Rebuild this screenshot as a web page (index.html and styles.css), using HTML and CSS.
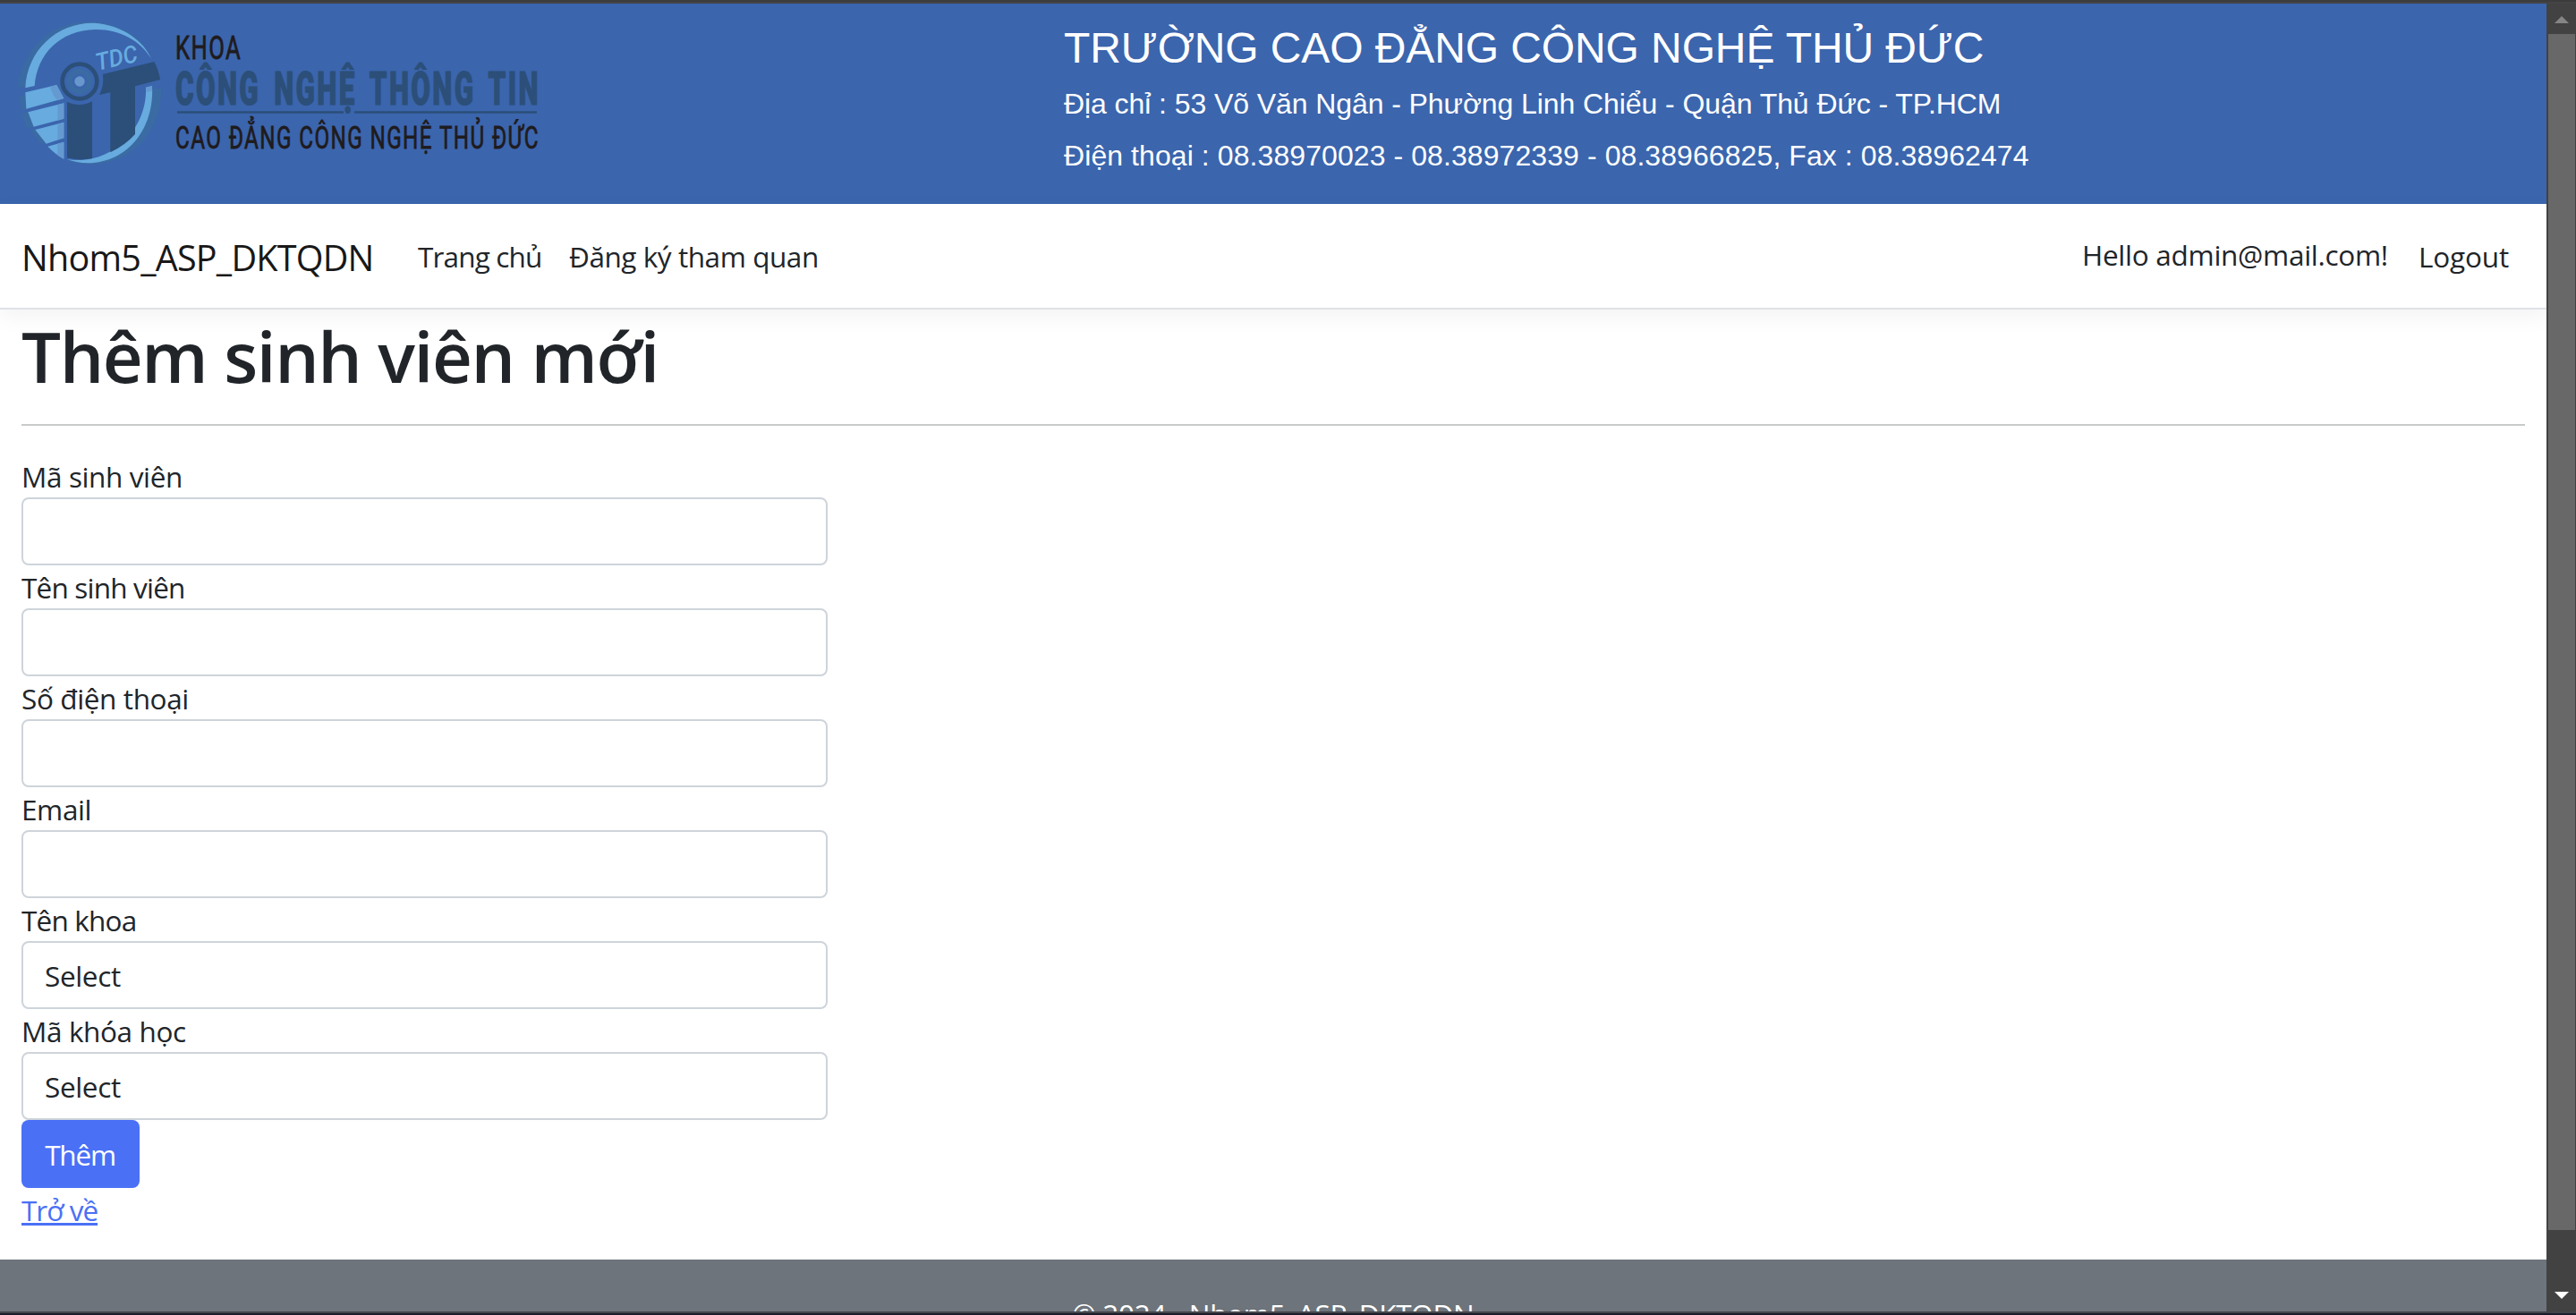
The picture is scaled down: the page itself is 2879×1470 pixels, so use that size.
FILE: index.html
```html
<!DOCTYPE html>
<html lang="vi">
<head>
<meta charset="utf-8">
<title>Thêm sinh viên mới - Nhom5_ASP_DKTQDN</title>
<link rel="stylesheet" href="styles.css">
</head>
<body>
<div class="window-edge"></div>
<div class="viewport">
  <div class="page">
    <div class="banner">
      <svg class="logo" viewBox="0 0 620 200" width="620" height="200">
        <g transform="translate(10 6) scale(.33333)">
          <path fill="#3b6ba3" d="M30 265C45 130 150 30 290 45C400 55 455 110 475 165C430 75 350 50 280 52C160 60 60 150 55 262ZM35 292L58 288L62 335L42 340ZM42 350L64 345L85 395L60 400ZM70 405L88 403L125 450L108 452ZM510 265C515 400 420 525 265 521C235 519 210 514 195 505C330 540 465 440 475 270Z"/>
          <path fill="#67abdf" d="M55 265C60 140 160 45 285 47C380 52 455 110 477 167C440 105 370 68 290 69C170 72 95 150 86 258Z"/>
          <path fill="#67abdf" d="M55 280L160 255L184 300L58 335ZM64 346L184 316V368L83 395ZM88 405L184 380V433L125 452ZM130 461L184 446V503Q155 487 130 461ZM459 263L480 258C488 400 400 515 265 517Q225 516 195 504C345 528 465 400 459 263Z"/>
          <path fill="#659ad0" d="M138 260L160 255L184 300L163 307Q145 290 138 260ZM163 322L184 316V368L163 374ZM163 386L184 380V433L163 439ZM163 452L184 446V503L163 491ZM459 263L480 258V275L461 279Z"/>
          <path fill="#2b4f78" d="M195 312Q235 332 279 310V501Q235 509 195 499ZM315 219L487 177Q502 205 507 237L423 259V420Q390 457 340 481V280L303 288Q320 255 315 219Z"/>
          <circle cx="237" cy="243" r="58" fill="none" stroke="#2b4f78" stroke-width="14"/>
          <circle cx="237" cy="243" r="34" fill="none" stroke="#3b6ba3" stroke-width="17"/>
          <circle cx="237" cy="243" r="17" fill="#6898cb"/>
          <text class="logo-tdc" transform="translate(297 207) rotate(-13)" textLength="142" lengthAdjust="spacingAndGlyphs">TDC</text>
        </g>
        <text class="logo-text" x="196" y="62" font-size="36" textLength="74" lengthAdjust="spacingAndGlyphs">KHOA</text>
        <text class="logo-name" x="196" y="113" font-size="52" textLength="408" lengthAdjust="spacingAndGlyphs">CÔNG NGHỆ THÔNG TIN</text>
        <path stroke="#2b4f78" stroke-width="2.500" d="M198 121.500H384M396 121.500H600"/>
        <text class="logo-text" x="196" y="162" font-size="35" textLength="407" lengthAdjust="spacingAndGlyphs">CAO ĐẲNG CÔNG NGHỆ THỦ ĐỨC</text>
      </svg>
      <div class="school">
        <div class="school-name">TRƯỜNG CAO ĐẲNG CÔNG NGHỆ THỦ ĐỨC</div>
        <div class="school-line address">Địa chỉ : 53 Võ Văn Ngân - Phường Linh Chiểu - Quận Thủ Đức - TP.HCM</div>
        <div class="school-line phone">Điện thoại : 08.38970023 - 08.38972339 - 08.38966825, Fax : 08.38962474</div>
      </div>
    </div>
    <nav class="navbar">
      <a class="brand">Nhom5_ASP_DKTQDN</a>
      <a class="nav-link home">Trang chủ</a>
      <a class="nav-link">Đăng ký tham quan</a>
      <div class="account">
        <span class="hello">Hello admin@mail.com!</span>
        <span class="logout">Logout</span>
      </div>
    </nav>
    <main class="content">
      <h1>Thêm sinh viên mới</h1>
      <hr>
      <form class="form">
        <label class="label">Mã sinh viên</label><div class="control"></div>
        <label class="label tight">Tên sinh viên</label><div class="control"></div>
        <label class="label">Số điện thoại</label><div class="control"></div>
        <label class="label">Email</label><div class="control"></div>
        <label class="label tight">Tên khoa</label><div class="control">Select</div>
        <label class="label">Mã khóa học</label><div class="control">Select</div>
        <button type="button" class="submit">Thêm</button>
      </form>
      <a class="back">Trở về</a>
    </main>
    <footer class="footer">© 2024 - Nhom5_ASP_DKTQDN</footer>
  </div>
  <div class="scrollbar">
    <svg width="16" height="8" viewBox="0 0 16 8"><path fill="#858585" d="M0 8L8 0L16 8Z"/></svg>
    <div class="thumb"></div>
    <svg class="down" width="16" height="8" viewBox="0 0 16 8"><path fill="#fff" d="M0 0H16L8 8Z"/></svg>
  </div>
</div>
<div class="window-bottom"></div>
</body>
</html>
```
FILE: styles.css
```css
* { box-sizing: border-box; }
body {
  margin: 0;
  height: 1470px;
  overflow: hidden;
  display: flex;
  flex-direction: column;
  background: #fff;
  color: #212529;
  font: 31.500px/48px "Open Sans", "Noto Sans", sans-serif;
}
.window-edge { height: 4px; background: #444; border-top: 2px solid #3c3c3c; }
.window-bottom { height: 4px; background: #1b1d2c; border-top: 2px solid #444548; }
.viewport { display: flex; height: 1462px; }
.page { width: 2846px; height: 1462px; overflow: hidden; }
.banner { display: flex; height: 224px; background: #3b65ad; }
.logo { flex: none; margin-right: 569px; overflow: visible; }
.school {
  color: #fff;
  font-family: "Liberation Sans", Arial, sans-serif;
  white-space: nowrap;
  padding-top: 20px;
}
.school-name { font-size: 48px; line-height: 60px; letter-spacing: -.1px; margin-bottom: 8px; }
.school-line { font-size: 32px; line-height: 48px; margin-bottom: 10px; }
.address { letter-spacing: -.08px; }
.phone { letter-spacing: .08px; }
.navbar {
  display: flex;
  align-items: center;
  height: 118px;
  padding: 4px 40px 2px 24px;
  border-bottom: 2px solid #dee2e6;
  box-shadow: 0 8px 24px rgba(0, 0, 0, .05);
  white-space: nowrap;
}
.brand { width: 443px; padding-top: 1px; font-size: 39.500px; letter-spacing: -.75px; color: #181818; }
.nav-link { letter-spacing: -.44px; }
.home { width: 169px; letter-spacing: -.85px; }
.account { display: flex; gap: 34px; margin-left: auto; padding-right: 2px; }
.hello { position: relative; top: -2px; letter-spacing: -.28px; }
.logout { letter-spacing: -.15px; }
.content { padding: 13px 24px 0; height: 1062px; }
h1 { margin: 0; font-size: 78px; line-height: 78px; font-weight: 600; letter-spacing: -1.400px; }
hr { margin: 37px 0 32px; border: 0; height: 2px; background: #c8c9ca; }
.form { display: flex; flex-direction: column; width: 901px; }
.label { height: 48px; line-height: 50px; letter-spacing: -.38px; }
.tight { letter-spacing: -.8px; }
.control {
  height: 76px;
  padding: 12px 24px;
  line-height: 50px;
  letter-spacing: -.35px;
  border: 2px solid #ced4da;
  border-radius: 8px;
}
.submit {
  width: 132px;
  height: 76px;
  padding: 2px 1px 0 0;
  border: 0;
  border-radius: 8px;
  background: #4a70f6;
  color: #fff;
  font: inherit;
  letter-spacing: -1.200px;
}
.back { display: block; width: fit-content; line-height: 50px; letter-spacing: -1px; color: #4a70f6; text-decoration: underline; }
.footer { height: 120px; background: #6d747b; color: #fff; text-align: center; padding-top: 37px; letter-spacing: -.3px; }
.scrollbar {
  width: 33px;
  background: #424242;
  display: flex;
  flex-direction: column;
  align-items: center;
  padding-top: 14px;
}
.thumb { width: 30px; height: 1337px; margin-top: 12px; background: #686868; }
.down { margin-top: 69px; }
.logo-text { font-family: Roboto, sans-serif; fill: #1f1b1d; stroke: #1f1b1d; stroke-width: .8px; letter-spacing: 2px; }
.logo-name { font-family: Roboto, sans-serif; font-weight: 900; fill: #2b4f78; stroke: #2b4f78; stroke-width: 1.200px; letter-spacing: 4px; word-spacing: 8px; }
.logo-tdc { font: italic 500 80px Roboto, sans-serif; fill: #67abdf; }
```
